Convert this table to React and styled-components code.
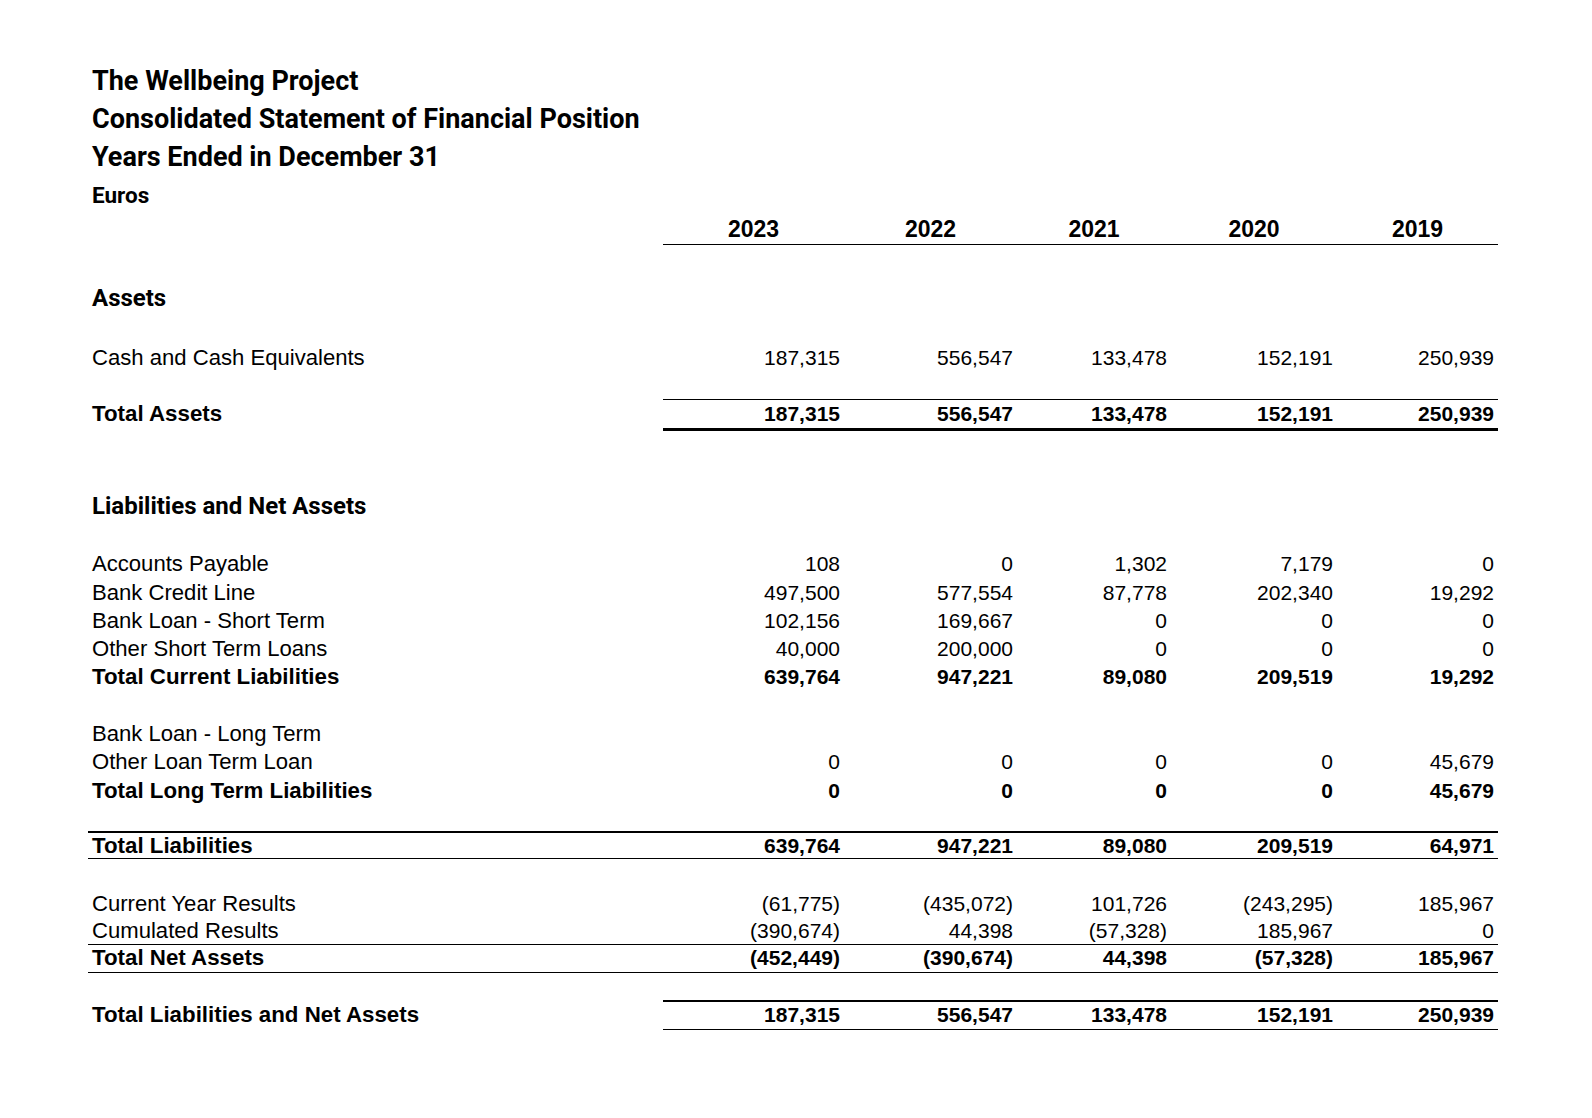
import React from 'react';
import styled, { createGlobalStyle } from 'styled-components';

const GlobalStyle = createGlobalStyle`
    body {
        margin: 0;
        background: #ffffff;
        color: #000000;
        font-family: "Liberation Sans", Arial, sans-serif;
    }
`;

const COLS = '575px 181px 173px 154px 166px 161px';
const LABEL_W = 575;

const Page = styled.div`
    width: 1592px;
    min-height: 1118px;
    box-sizing: border-box;
    padding: 62px 0 0 88px;
    background: #ffffff;
`;

const Header = styled.header`
    display: flex;
    flex-direction: column;
    padding-left: 4px;
`;

const Title = styled.div`
    font-family: Roboto, "Noto Sans", sans-serif;
    font-weight: 700;
    font-size: 27px;
    line-height: 38px;
    white-space: nowrap;
`;

const Unit = styled(Title)`
    font-size: 22.5px;
`;

const Table = styled.div`
    display: flex;
    flex-direction: column;
    width: 1410px;
`;

const Row = styled.div`
    display: grid;
    grid-template-columns: ${COLS};
    align-items: center;
    height: ${p => p.$h}px;
    margin-top: ${p => p.$mt || 0}px;
`;

const Rule = styled.div`
    height: ${p => p.$w}px;
    margin-top: ${p => p.$mt || 0}px;
    margin-left: ${p => (p.$full ? 0 : LABEL_W)}px;
    background: #000000;
`;

const Label = styled.div`
    padding-left: 4px;
    font-size: ${p => (p.$bold ? 22.3 : 22.1)}px;
    font-weight: ${p => (p.$bold ? 700 : 400)};
    white-space: nowrap;
`;

const Section = styled.div`
    padding-left: 4px;
    font-family: Roboto, "Noto Sans", sans-serif;
    font-weight: 700;
    font-size: 24px;
    white-space: nowrap;
`;

const Num = styled.div`
    padding-right: 4px;
    text-align: right;
    font-size: 21px;
    font-weight: ${p => (p.$bold ? 700 : 400)};
    white-space: nowrap;
`;

const Year = styled.div`
    text-align: center;
    font-size: 23px;
    font-weight: 700;
`;

const YEARS = ['2023', '2022', '2021', '2020', '2019'];

const DataRow = ({ label, values, bold, h = 28, mt }) => (
    <Row $h={h} $mt={mt}>
        <Label $bold={bold}>{label}</Label>
        {values.map((v, i) => (
            <Num key={i} $bold={bold}>{v}</Num>
        ))}
    </Row>
);

const blank = ['', '', '', '', ''];

const App = () => (
    <Page>
        <GlobalStyle />
        <Header>
            <Title>The Wellbeing Project</Title>
            <Title>Consolidated Statement of Financial Position</Title>
            <Title>Years Ended in December 31</Title>
            <Unit>Euros</Unit>
        </Header>
        <Table>
            <Row $h={30}>
                <span />
                {YEARS.map(y => <Year key={y}>{y}</Year>)}
            </Row>
            <Rule $w={1} />

            <Row $h={28} $mt={39}>
                <Section>Assets</Section>
            </Row>
            <DataRow mt={32} label="Cash and Cash Equivalents"
                values={['187,315', '556,547', '133,478', '152,191', '250,939']} />
            <Rule $w={1} $mt={27} />
            <DataRow bold label="Total Assets"
                values={['187,315', '556,547', '133,478', '152,191', '250,939']} />
            <Rule $w={3} />

            <Row $h={28} $mt={61}>
                <Section>Liabilities and Net Assets</Section>
            </Row>
            <DataRow mt={30} h={28.4} label="Accounts Payable"
                values={['108', '0', '1,302', '7,179', '0']} />
            <DataRow h={28.4} label="Bank Credit Line"
                values={['497,500', '577,554', '87,778', '202,340', '19,292']} />
            <DataRow h={28.4} label="Bank Loan - Short Term"
                values={['102,156', '169,667', '0', '0', '0']} />
            <DataRow h={28.4} label="Other Short Term Loans"
                values={['40,000', '200,000', '0', '0', '0']} />
            <DataRow h={26} bold label="Total Current Liabilities"
                values={['639,764', '947,221', '89,080', '209,519', '19,292']} />

            <DataRow mt={30} h={28.4} label="Bank Loan - Long Term" values={blank} />
            <DataRow h={28.4} label="Other Loan Term Loan"
                values={['0', '0', '0', '0', '45,679']} />
            <DataRow h={28.4} bold label="Total Long Term Liabilities"
                values={['0', '0', '0', '0', '45,679']} />

            <Rule $full $w={2} $mt={26} />
            <DataRow h={25} bold label="Total Liabilities"
                values={['639,764', '947,221', '89,080', '209,519', '64,971']} />
            <Rule $full $w={1} />

            <DataRow mt={32} h={27} label="Current Year Results"
                values={['(61,775)', '(435,072)', '101,726', '(243,295)', '185,967']} />
            <DataRow h={26} label="Cumulated Results"
                values={['(390,674)', '44,398', '(57,328)', '185,967', '0']} />
            <Rule $full $w={1} />
            <DataRow h={27} bold label="Total Net Assets"
                values={['(452,449)', '(390,674)', '44,398', '(57,328)', '185,967']} />
            <Rule $full $w={1} />

            <Rule $w={2} $mt={27} />
            <DataRow h={27} bold label="Total Liabilities and Net Assets"
                values={['187,315', '556,547', '133,478', '152,191', '250,939']} />
            <Rule $w={1} />
        </Table>
    </Page>
);

export default App;
